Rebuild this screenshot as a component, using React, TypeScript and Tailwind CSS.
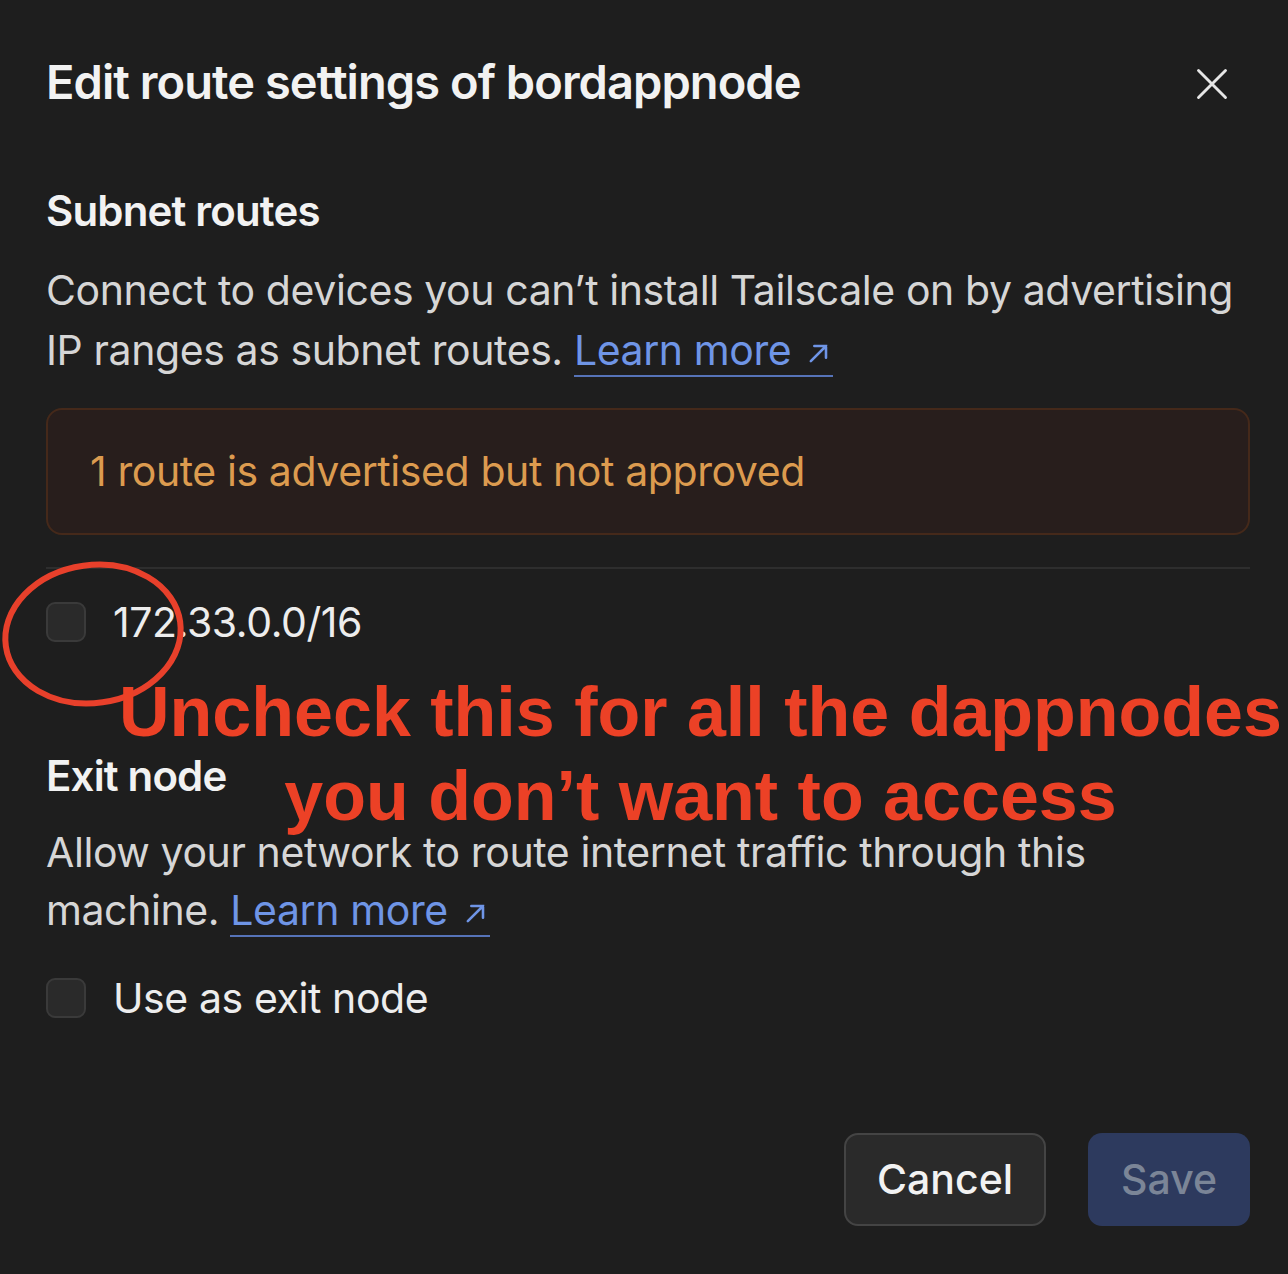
import React from "react";

const Check = () => (
    <div className="w-[40px] h-[40px] shrink-0 rounded-[9px] border-2 border-[#3a3a3a] bg-[#2a2a2a]" />
);

const LearnMore = () => (
    <a className="inline-block leading-[44px] pb-[3px] border-b-2 border-[#5673b8] text-[#6f95e6]">
        Learn more
        <svg className="inline-block align-[-2px] ml-[14px]" width="28" height="28" viewBox="0 0 24 24" fill="none" stroke="currentColor" strokeWidth="2.2" strokeLinecap="round">
            <path d="M5 19L18 6M8 6h10v10" />
        </svg>
    </a>
);

export default function App() {
    return (
        <div className="relative w-[1288px] h-[1274px] bg-[#1e1e1e] text-[#d6d6d6] overflow-hidden" style={{ fontFamily: "Inter, 'Noto Sans', sans-serif" }}>
            <div className="pl-[46px] pr-[38px] pt-[52px]">
                {/* header */}
                <div className="flex items-center justify-between">
                    <h1 className="text-[47px] leading-[60px] font-semibold text-[#f2f2f2] tracking-[-0.02em]">
                        Edit route settings of bordappnode
                    </h1>
                    <svg className="mr-[20px] mt-[4px]" width="36" height="36" viewBox="0 0 24 24" fill="none" stroke="#e6e6e6" strokeWidth="1.9" strokeLinecap="round">
                        <path d="M3 3l18 18M21 3L3 21" />
                    </svg>
                </div>

                {/* subnet routes */}
                <h2 className="mt-[75px] text-[42px] leading-[48px] font-semibold text-[#f2f2f2] tracking-[-0.02em]">Subnet routes</h2>
                <p className="mt-[25px] text-[41px] leading-[60px] tracking-[-0.01em]">
                    Connect to devices you can’t install Tailscale on by advertising IP ranges as subnet routes. <LearnMore />
                </p>

                <div className="mt-[28px] h-[127px] rounded-[16px] border-2 border-[#45291a] bg-[#281e1c] flex items-center pl-[42px]">
                    <span className="text-[41px] text-[#dc9b4f] tracking-[-0.01em]">1 route is advertised but not approved</span>
                </div>

                <div className="mt-[32px] h-[2px] bg-[#2e2e2e]" />

                <div className="mt-[33px] flex items-center gap-[27px]">
                    <Check />
                    <span className="text-[41px] leading-[40px] text-[#ededed] tracking-[-0.01em]">172.33.0.0/16</span>
                </div>

                {/* exit node */}
                <h2 className="mt-[110px] text-[42px] leading-[48px] font-semibold text-[#f2f2f2] tracking-[-0.02em]">Exit node</h2>
                <p className="mt-[23px] text-[41px] leading-[58px] tracking-[-0.01em]">
                    Allow your network to route internet traffic through this machine. <LearnMore />
                </p>

                <div className="mt-[39px] flex items-center gap-[27px]">
                    <Check />
                    <span className="text-[41px] leading-[40px] text-[#ededed] tracking-[-0.01em]">Use as exit node</span>
                </div>

                {/* footer */}
                <div className="mt-[115px] flex justify-end gap-[42px]">
                    <button className="w-[202px] h-[93px] rounded-[14px] border-2 border-[#444] bg-[#2a2a2a] text-[41px] font-medium text-[#f2f2f2]">
                        Cancel
                    </button>
                    <button className="w-[162px] h-[93px] rounded-[14px] bg-[#2d3a5e] text-[41px] font-medium text-[#7b8597]">
                        Save
                    </button>
                </div>
            </div>

            {/* annotation overlay */}
            <svg className="absolute left-0 top-[556px]" width="200" height="160" viewBox="0 0 200 160" fill="none">
                <ellipse cx="93" cy="78" rx="88" ry="69" stroke="#e8402b" strokeWidth="6" transform="rotate(-8 93 78)" />
            </svg>
            <div
                className="absolute left-[113px] top-[670px] w-[1175px] text-center text-[70px] leading-[84px] font-bold text-[#ec4126]"
                style={{ fontFamily: "'Liberation Sans', Arial, sans-serif" }}
            >
                Uncheck this for all the dappnodes
                <br />
                you don’t want to access
            </div>
        </div>
    );
}
